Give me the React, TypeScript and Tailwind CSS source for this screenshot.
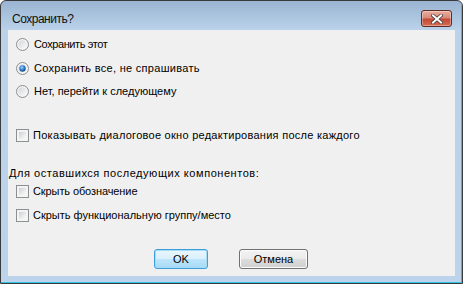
import React from "react";

function Radio({ checked }: { checked?: boolean }) {
  return (
    <svg width="13" height="13" viewBox="0 0 13 13" className="shrink-0">
      <defs>
        <linearGradient id="rbg" x1="0" y1="0" x2="1" y2="1">
          <stop offset="0" stopColor="#d4d6d9" />
          <stop offset="1" stopColor="#fbfbfb" />
        </linearGradient>
        <radialGradient id="rdot" cx="0.4" cy="0.35" r="0.7">
          <stop offset="0" stopColor="#a9d6ff" />
          <stop offset="0.45" stopColor="#3d8ad6" />
          <stop offset="1" stopColor="#0e3f7a" />
        </radialGradient>
      </defs>
      <circle cx="6.5" cy="6.5" r="6" fill="#f4f4f4" stroke="#8a8c8f" strokeWidth="1" />
      <circle cx="6.5" cy="6.5" r="4.2" fill="url(#rbg)" />
      {checked && <circle cx="6.5" cy="6.5" r="3.2" fill="url(#rdot)" />}
    </svg>
  );
}

function Check() {
  return (
    <div className="w-[13px] h-[13px] shrink-0 border border-[#8e8f8f] bg-[#f4f4f4] p-[2px]">
      <div className="w-full h-full bg-[linear-gradient(135deg,#c9cdd3_0%,#e6e8ea_50%,#f9f9f9_100%)]" />
    </div>
  );
}

export default function App() {
  const font = { fontFamily: '"Liberation Sans", Arial, sans-serif' };
  return (
    <div
      className="w-[463px] h-[284px] border border-[#3a3a3a] rounded-t-[6px] overflow-hidden bg-[linear-gradient(to_bottom,#9ab4d2_0px,#bad2ea_29px,#bcd3eb_100%)]"
      style={font}
    >
      <div className="w-full h-full flex flex-col border-r border-b border-[#2ec3e6]">
        <div className="h-[29px] flex items-start justify-between pl-[11px] pr-[9px] shrink-0">
          <div className="pt-[11px] text-[12px] leading-[14px] tracking-[-0.5px] text-[#111]">Сохранить?</div>
          <div className="mt-[9px] w-[31px] h-[17px] rounded-[3px] border border-[#5e2a24] bg-[linear-gradient(to_bottom,#e9ad9f_0%,#d88b7b_45%,#c24a36_55%,#d46d52_100%)] flex items-center justify-center shadow-[inset_0_0_0_1px_rgba(255,255,255,0.35)]">
            <svg width="12" height="10" viewBox="0 0 12 10">
              <path d="M2 1.5 L10 8.5 M10 1.5 L2 8.5" stroke="#4b3a38" strokeWidth="3.6" strokeLinecap="square" />
              <path d="M2 1.5 L10 8.5 M10 1.5 L2 8.5" stroke="#ffffff" strokeWidth="2" strokeLinecap="square" />
            </svg>
          </div>
        </div>
        <div className="flex-1 pl-[7px] pr-[6px] pb-[6px] flex">
          <div className="flex-1 bg-[#f0f0f0] flex flex-col text-[11px] leading-[16px] text-black">
            <div className="mt-[6px] h-[16px] flex items-center pl-[8px] gap-[5px]">
              <Radio />
              <span className="tracking-[-0.4px]">Сохранить этот</span>
            </div>
            <div className="mt-[8px] h-[16px] flex items-center pl-[8px] gap-[5px]">
              <Radio checked />
              <span className="tracking-[0.3px]">Сохранить все, не спрашивать</span>
            </div>
            <div className="mt-[7px] h-[16px] flex items-center pl-[8px] gap-[5px]">
              <Radio />
              <span>Нет, перейти к следующему</span>
            </div>
            <div className="mt-[28px] h-[16px] flex items-center pl-[8px] gap-[4px]">
              <Check />
              <span className="tracking-[0.27px]">Показывать диалоговое окно редактирования после каждого</span>
            </div>
            <div className="mt-[22px] h-[16px] flex items-center pl-[1px]">
              <span className="tracking-[0.55px]">Для оставшихся последующих компонентов:</span>
            </div>
            <div className="mt-[2px] h-[16px] flex items-center pl-[8px] gap-[4px]">
              <Check />
              <span className="tracking-[-0.1px]">Скрыть обозначение</span>
            </div>
            <div className="mt-[8px] h-[16px] flex items-center pl-[8px] gap-[4px]">
              <Check />
              <span>Скрыть функциональную группу/место</span>
            </div>
            <div className="mt-[26px] flex justify-center gap-[31px] pr-[1px]">
              <button className="w-[54px] h-[20px] rounded-[3px] border border-[#3c9fdc] shadow-[inset_0_0_0_1px_#a6dcf6] bg-[linear-gradient(to_bottom,#eaf6fd_0%,#d9f0fc_50%,#bee6fd_50%,#a7d9f5_100%)] text-[11px] leading-[16px] text-black">
                OK
              </button>
              <button className="w-[69px] h-[20px] rounded-[3px] border border-[#707070] shadow-[inset_0_0_0_1px_#fcfcfc] bg-[linear-gradient(to_bottom,#f2f2f2_0%,#ebebeb_50%,#dddddd_50%,#cfcfcf_100%)] text-[11px] leading-[16px] text-black">
                Отмена
              </button>
            </div>
          </div>
        </div>
      </div>
    </div>
  );
}
